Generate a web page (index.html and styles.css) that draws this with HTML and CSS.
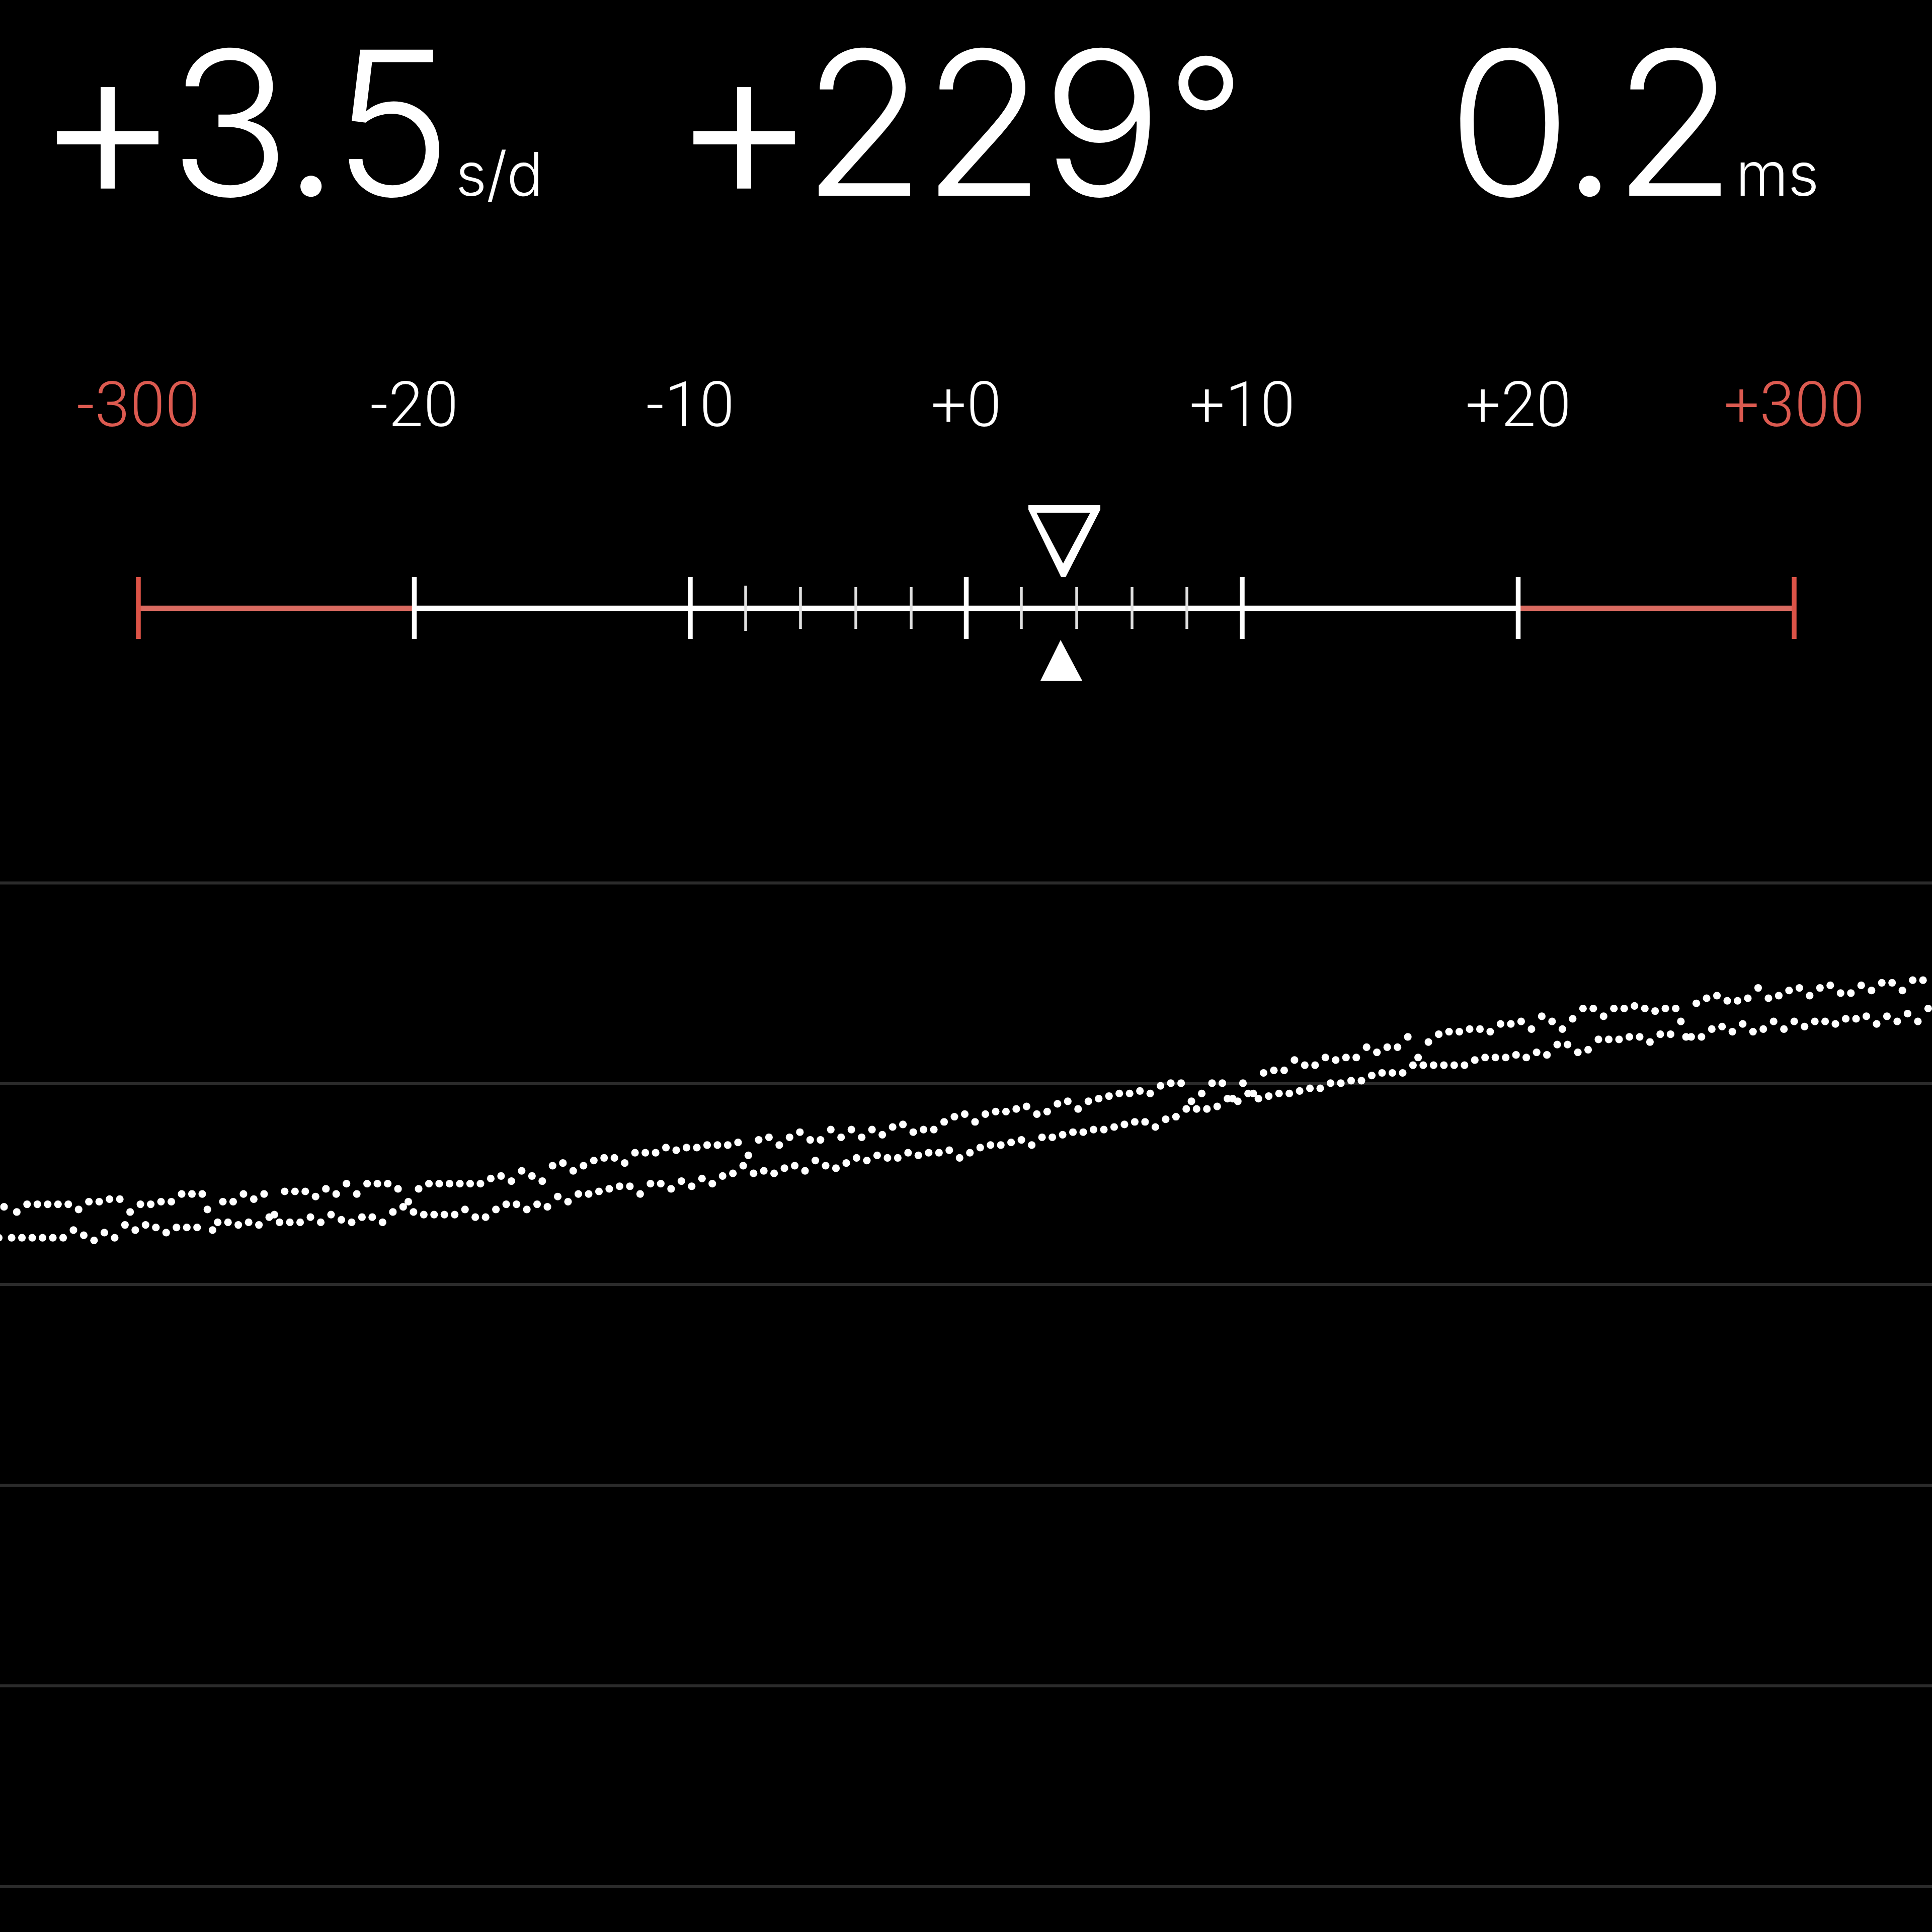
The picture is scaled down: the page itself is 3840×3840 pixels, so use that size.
FILE: index.html
```html
<!DOCTYPE html>
<html lang="en">
<head>
  <meta charset="UTF-8">
  <meta name="viewport" content="width=device-width, initial-scale=1.0">
  <title>Timegrapher</title>
  <link rel="stylesheet" href="styles.css">
</head>
<body>
  <div class="container">
    <div class="readouts">
      <div class="readout rate"><span class="value"><span class="sign">+</span>3.5</span><span class="unit">s/d</span></div>
      <div class="readout amplitude"><span class="value"><span class="sign">+</span>229<span class="degree">°</span></span></div>
      <div class="readout beat"><span class="value">0.2</span><span class="unit">ms</span></div>
    </div>

    <div class="labels">
      <span class="limit">-300</span>
      <span>-20</span>
      <span>-10</span>
      <span>+0</span>
      <span>+10</span>
      <span>+20</span>
      <span class="limit">+300</span>
    </div>

    <svg class="scale" viewBox="0 960 3840 440">
      <path class="limit-line" d="M274 1209H823M3017 1209H3566"/>
      <path class="limit-tick" d="M275 1147V1270M3566 1147V1270"/>
      <path class="axis" d="M823 1209H3017"/>
      <path class="major" d="M823.5 1147V1270M1372 1147V1270M1920.5 1147V1270M2469 1147V1270M3017.5 1147V1270"/>
      <path class="minor" d="M1482 1164V1254M1591 1167V1250M1701 1167V1250M1811 1167V1250M2030 1167V1250M2140 1167V1250M2250 1167V1250M2359 1167V1250"/>
      <path class="marker" d="M2044 1004H2187V1013L2118 1147H2109L2044 1013ZM2060 1019L2113 1120L2167 1019Z"/>
      <path class="marker" d="M2108 1272L2151 1353H2068Z"/>
    </svg>

    <svg class="trace" viewBox="0 1400 3840 2440">
      <path class="grid" d="M0 1755H3840M0 2154H3840M0 2553H3840M0 2952H3840M0 3350.5H3840M0 3750H3840"/>
      <g id="beats"></g>
    </svg>
  </div>

  <script>
    // Row of every beat, tick and tock in turn
    const beats = [
      480,470,480,467,480,467,480,467,480,467,480,467,477,469,479,466,481,466,478,465,
      480,465,475,470,477,467,475,467,476,466,478,466,476,463,476,463,476,463,469,477,
      474,466,474,466,475,463,474,465,475,463,472,471,474,462,474,462,474,462,472,464,
      474,461,471,463,473,459,474,463,472,459,472,459,474,459,470,461,468,466,470,461,
      471,459,471,459,471,459,471,459,469,459,472,459,472,457,469,456,467,458,467,454,
      469,456,467,458,468,452,464,451,466,454,463,452,463,450,462,449,461,449,460,451,
      460,447,463,447,459,447,459,445,461,446,458,445,460,445,457,444,459,444,456,444,
      455,443,452,448,455,442,454,441,455,444,453,441,452,439,454,442,450,442,452,438,
      453,441,451,438,449,441,450,438,448,440,449,437,449,436,447,439,448,438,447,438,
      447,435,446,433,449,432,447,435,445,432,444,431,444,431,443,430,442,429,444,432,
      441,431,441,428,440,427,439,430,439,427,438,426,438,425,437,424,436,424,435,423,
      435,424,437,421,434,420,433,420,430,427,430,424,430,420,429,420,426,426,427,420,
      424,424,426,416,425,415,424,415,424,411,423,413,422,413,422,410,420,411,420,410,
      419,410,419,406,417,408,416,406,416,406,416,402,413,410,413,404,413,401,413,400,
      413,400,413,399,411,399,410,400,410,397,410,397,409,396,410,399,408,394,409,396,
      405,399,405,395,408,391,407,391,403,394,403,391,403,391,402,390,402,391,404,392,
      401,391,401,391,396,402,402,389,402,387,399,386,398,388,400,388,397,387,400,383,
      399,387,396,386,399,384,396,383,398,386,396,383,396,382,397,385,395,385,395,382,
      394,384,397,381,394,381,396,384,393,380,396,380,391
    ];
    const unit = 5.12;
    const group = document.getElementById('beats');

    function addDot(x, row) {
      const dot = document.createElementNS('http://www.w3.org/2000/svg', 'circle');
      dot.setAttribute('cx', x.toFixed(2));
      dot.setAttribute('cy', ((row + 0.5) * unit).toFixed(2));
      dot.setAttribute('r', 7.6);
      group.appendChild(dot);
    }

    addDot(-2.5, 480);
    addDot(8, 468);
    beats.forEach((row, i) => addDot(23.1 + i * unit * 2, row));
  </script>
</body>
</html>
```

FILE: styles.css
```css
body {
  margin: 0;
  background-color: #000;
  color: #fff;
  font-family: Inter, "Liberation Sans", sans-serif;
  font-weight: 300;
}
.container {
  width: 3840px;
  height: 3840px;
  overflow: hidden;
}
.readouts {
  display: grid;
  grid-template-columns: 1240px 1400px 1200px;
  height: 720px;
}
.readout {
  white-space: nowrap;
  line-height: 488px;
}
.rate {
  padding-left: 68px;
}
.amplitude {
  padding-left: 93px;
}
.beat {
  padding-left: 237px;
}
.value {
  font-size: 399px;
  letter-spacing: -7px;
}
.beat .value {
  letter-spacing: -10px;
}
.sign {
  font-size: 447px;
  line-height: 0;
  letter-spacing: -24px;
  vertical-align: -12px;
}
.amplitude .sign {
  letter-spacing: -30px;
}
.degree {
  font-size: 342px;
  line-height: 0;
  margin-left: 15px;
  vertical-align: 27px;
}
.unit {
  font-size: 120px;
  letter-spacing: -1px;
  margin-left: 14px;
}
.beat .unit {
  margin-left: 9px;
}
.labels {
  display: grid;
  grid-template-columns: repeat(7, 1fr);
  height: 240px;
  font-family: Roboto, "Liberation Sans", sans-serif;
  font-size: 124px;
  letter-spacing: 1px;
  line-height: 170px;
  text-align: center;
}
.labels span {
  padding-left: 2px;
}
.labels .limit {
  color: #dc5a50;
}
.scale, .trace {
  display: block;
  width: 3840px;
}
.scale {
  height: 440px;
  fill: none;
  stroke: #fff;
}
.axis {
  stroke-width: 10.5;
}
.major {
  stroke-width: 9.5;
}
.minor {
  stroke: #e0e0e0;
  stroke-width: 5.5;
}
.limit-line {
  stroke: #d96a60;
  stroke-width: 10.5;
}
.limit-tick {
  stroke: #dc5347;
  stroke-width: 9.5;
}
.marker {
  fill: #fff;
  fill-rule: evenodd;
  stroke: none;
}
.trace {
  height: 2440px;
  fill: #fff;
}
.grid {
  stroke: #2b2b2b;
  stroke-width: 6;
}
```
